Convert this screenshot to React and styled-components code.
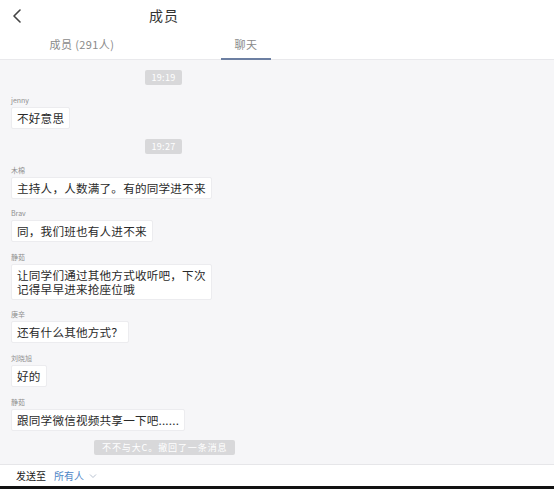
import styled, { createGlobalStyle } from 'styled-components';

const GlobalStyle = createGlobalStyle`
  html, body {
    margin: 0;
    padding: 0;
    background: #ffffff;
  }
  body {
    font-family: "Noto Sans CJK SC", "Noto Sans", sans-serif;
  }
`;

const messages = [
  { type: 'time', text: '19:19' },
  { type: 'msg', name: 'jenny', text: '不好意思' },
  { type: 'time', text: '19:27' },
  { type: 'msg', name: '木棉', text: '主持人，人数满了。有的同学进不来' },
  { type: 'msg', name: 'Brav', text: '同，我们班也有人进不来' },
  {
    type: 'msg',
    name: '静茹',
    text: '让同学们通过其他方式收听吧，下次\n记得早早进来抢座位哦',
  },
  { type: 'msg', name: '庚辛', text: '还有什么其他方式？' },
  { type: 'msg', name: '刘晓旭', text: '好的' },
  { type: 'msg', name: '静茹', text: '跟同学微信视频共享一下吧......' },
  { type: 'notice', text: '不不与大C。撤回了一条消息' },
];

export default function App() {
  return (
    <>
      <GlobalStyle />
      <Screen>
        <Header>
          <TitleRow>
            <BackButton aria-label="back">
              <svg width="10" height="14" viewBox="0 0 10 14">
                <path
                  d="M8 1 L2 7 L8 13"
                  fill="none"
                  stroke="#444"
                  strokeWidth="1.6"
                  strokeLinecap="round"
                  strokeLinejoin="round"
                />
              </svg>
            </BackButton>
            <Title>成员</Title>
          </TitleRow>
          <Tabs>
            <Tab>成员 (291人)</Tab>
            <Tab active>聊天</Tab>
          </Tabs>
        </Header>

        <ChatList>
          {messages.map((m, i) => {
            if (m.type === 'time') {
              return (
                <Centered key={i}>
                  <Pill>{m.text}</Pill>
                </Centered>
              );
            }
            if (m.type === 'notice') {
              return (
                <Centered key={i} notice>
                  <Pill wide>{m.text}</Pill>
                </Centered>
              );
            }
            return (
              <Message key={i}>
                <Sender>{m.name}</Sender>
                <Bubble>{m.text}</Bubble>
              </Message>
            );
          })}
        </ChatList>

        <Footer>
          <SendLabel>发送至</SendLabel>
          <Target>所有人</Target>
          <svg width="8" height="6" viewBox="0 0 8 6">
            <path d="M1 1.5 L4 4.5 L7 1.5" fill="none" stroke="#b8c2d0" strokeWidth="1" />
          </svg>
        </Footer>
        <BottomEdge />
      </Screen>
    </>
  );
}

//Styled-Component
const Screen = styled.div`
  display: flex;
  flex-direction: column;
  width: 554px;
  height: 489px;
  overflow: hidden;
  background: #f6f6f8;
`;

const Header = styled.div`
  background: #ffffff;
  border-bottom: 1px solid #e9e9ec;
  height: 60px;
  box-sizing: border-box;
  display: flex;
  flex-direction: column;
`;

const TitleRow = styled.div`
  position: relative;
  width: 328px;
  height: 31px;
  display: flex;
  align-items: center;
  justify-content: center;
`;

const BackButton = styled.div`
  position: absolute;
  left: 12px;
  top: 9px;
  display: flex;
`;

const Title = styled.div`
  font-size: 14px;
  color: #333;
  line-height: 14px;
  margin-top: -1px;
  letter-spacing: 1px;
`;

const Tabs = styled.div`
  width: 328px;
  display: grid;
  grid-template-columns: 1fr 1fr;
  flex: 1;
`;

const Tab = styled.div`
  display: flex;
  justify-content: center;
  align-items: center;
  font-size: 11px;
  color: #8a8a8a;
  letter-spacing: 0.4px;
  position: relative;
  padding-bottom: 2px;
  &::after {
    content: '';
    display: ${(p) => (p.active ? 'block' : 'none')};
    position: absolute;
    bottom: -1px;
    left: 57px;
    width: 50px;
    height: 2px;
    background: #6c7fa2;
  }
`;

const ChatList = styled.div`
  flex: 1;
  display: flex;
  flex-direction: column;
  gap: 9.6px;
  padding: 10px 11px 0;
  box-sizing: border-box;
`;

const Centered = styled.div`
  display: flex;
  justify-content: flex-start;
  padding-left: ${(p) => (p.notice ? 83 : 134)}px;
  margin-bottom: 1px;
`;

const Pill = styled.div`
  background: #d8d8da;
  color: #ffffff;
  font-size: 9px;
  line-height: 15px;
  height: 15px;
  padding: 0 ${(p) => (p.wide ? 8 : 6.5)}px;
  letter-spacing: ${(p) => (p.wide ? 0.9 : 0.3)}px;
  border-radius: 2px;
  white-space: nowrap;
`;

const Message = styled.div`
  display: flex;
  flex-direction: column;
  align-items: flex-start;
`;

const Sender = styled.div`
  font-size: 7px;
  line-height: 10px;
  height: 10px;
  color: #8f8f8f;
  margin-bottom: 2px;
`;

const Bubble = styled.div`
  background: #ffffff;
  border: 1px solid #ececef;
  border-radius: 2px;
  padding: 3px 5px;
  font-size: 11.6px;
  line-height: 14px;
  color: #2a2a2a;
  white-space: pre-line;
  letter-spacing: 0.2px;
`;

const Footer = styled.div`
  height: 21px;
  background: #ffffff;
  border-top: 1px solid #e6e6e9;
  display: flex;
  align-items: center;
  padding-left: 16px;
  margin-top: 8px;
`;

const SendLabel = styled.span`
  font-size: 10px;
  color: #222;
  margin-right: 8px;
`;

const Target = styled.span`
  font-size: 10px;
  color: #4f86c6;
  margin-right: 5px;
`;

const BottomEdge = styled.div`
  height: 3px;
  background: #111;
`;
